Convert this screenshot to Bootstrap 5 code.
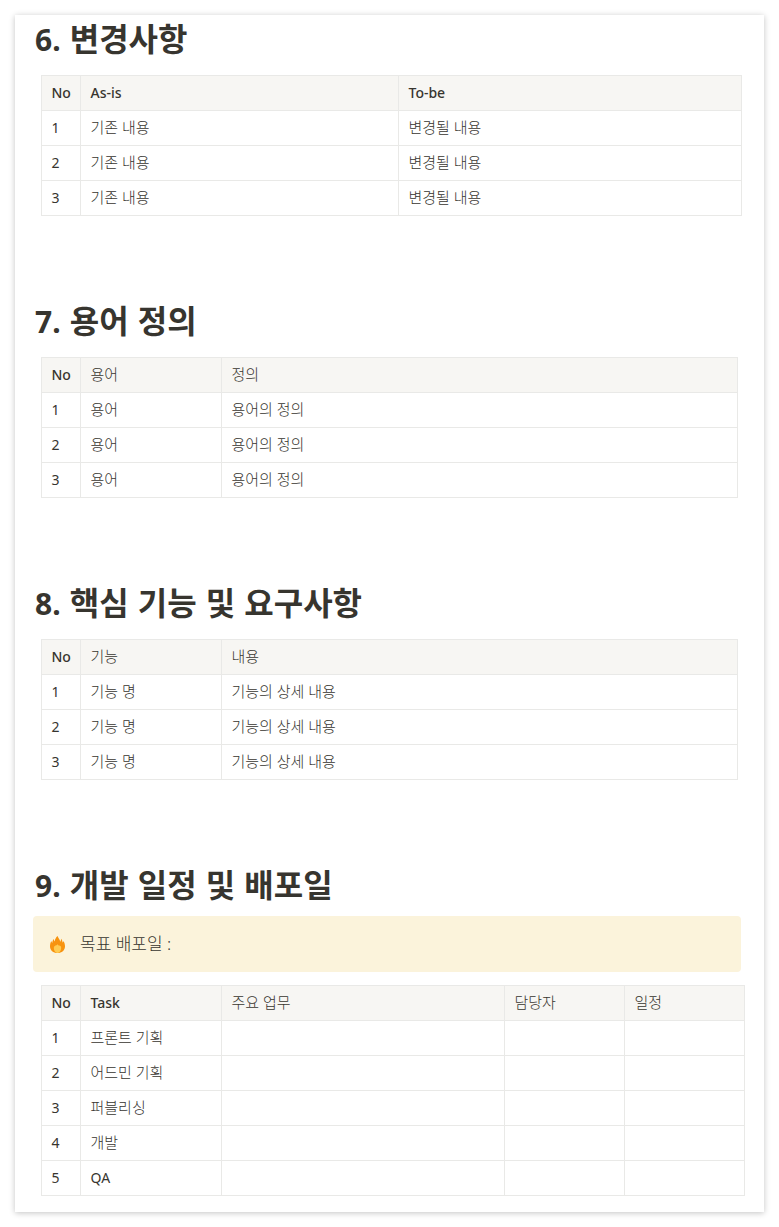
<!doctype html>
<html lang="ko">
<head>
<meta charset="utf-8">
<title>문서</title>
<link href="https://cdn.jsdelivr.net/npm/bootstrap@5.3.0/dist/css/bootstrap.min.css" rel="stylesheet">
<style>
html,body{height:100%;overflow:hidden}
body{background:#fff;font-family:"Noto Sans","Noto Sans CJK KR",sans-serif;color:#37352f;padding:15px}
.sheet{width:749px;height:1197px;background:#fff;box-shadow:0 1px 6px rgba(0,0,0,.24);padding:2px 0 0 18px;overflow:hidden}
.sec-title{font-family:"Noto Sans","Noto Sans CJK KR",sans-serif;font-size:32px;font-weight:700;line-height:44px;margin:0;color:#37352f;padding-left:2px;height:46px;word-spacing:.8px}
.sec-num{font-size:30px}
.sec{height:282px}
.sec-last{height:auto}
.doc-table{table-layout:fixed;border-collapse:collapse;margin:12px 0 0 8px;font-size:15px;color:#37352f}
.doc-table th,.doc-table td{border:1px solid #e9e9e7;height:35px;padding:0 9.5px 2px;vertical-align:middle;line-height:20px;font-weight:300;background:#fff;color:#37352f;box-shadow:none}
.doc-table thead th{background:#f7f6f3}
.doc-table .hd{font-weight:500}
.doc-table .lat{font-size:14px;padding-bottom:0;font-weight:400}
.doc-table .lat.hd{font-weight:500}
.doc-table-cal{margin-top:13px}
.w-a{width:700px}.w-b{width:696px}.w-c{width:703px}
.c-no{width:39px}.c-asis{width:318px}.c-tobe{width:343px}
.c-term{width:141px}.c-def{width:516px}.c-d5{width:283px}.c-d6{width:120px}
.notice{width:708px;height:56px;margin:7px 0 0 0;background:#fbf3db;border-radius:4px;padding-left:17px;gap:15px;color:#37352f}
.flame{width:15px;height:17px;flex:none}
.notice-t{font-size:17px;font-weight:300}
</style>
</head>
<body>
<div class="sheet">
  <section class="sec">
    <h2 class="sec-title"><span class="sec-num">6.</span> 변경사항</h2>
    <table class="doc-table w-a">
      <colgroup><col class="c-no"><col class="c-asis"><col class="c-tobe"></colgroup>
      <thead><tr><th class="hd lat">No</th><th class="hd lat">As-is</th><th class="hd lat">To-be</th></tr></thead>
      <tbody>
        <tr><td class="lat">1</td><td>기존 내용</td><td>변경될 내용</td></tr>
        <tr><td class="lat">2</td><td>기존 내용</td><td>변경될 내용</td></tr>
        <tr><td class="lat">3</td><td>기존 내용</td><td>변경될 내용</td></tr>
      </tbody>
    </table>
  </section>
  <section class="sec">
    <h2 class="sec-title"><span class="sec-num">7.</span> 용어 정의</h2>
    <table class="doc-table w-b">
      <colgroup><col class="c-no"><col class="c-term"><col class="c-def"></colgroup>
      <thead><tr><th class="hd lat">No</th><th>용어</th><th>정의</th></tr></thead>
      <tbody>
        <tr><td class="lat">1</td><td>용어</td><td>용어의 정의</td></tr>
        <tr><td class="lat">2</td><td>용어</td><td>용어의 정의</td></tr>
        <tr><td class="lat">3</td><td>용어</td><td>용어의 정의</td></tr>
      </tbody>
    </table>
  </section>
  <section class="sec">
    <h2 class="sec-title"><span class="sec-num">8.</span> 핵심 기능 및 요구사항</h2>
    <table class="doc-table w-b">
      <colgroup><col class="c-no"><col class="c-term"><col class="c-def"></colgroup>
      <thead><tr><th class="hd lat">No</th><th>기능</th><th>내용</th></tr></thead>
      <tbody>
        <tr><td class="lat">1</td><td>기능 명</td><td>기능의 상세 내용</td></tr>
        <tr><td class="lat">2</td><td>기능 명</td><td>기능의 상세 내용</td></tr>
        <tr><td class="lat">3</td><td>기능 명</td><td>기능의 상세 내용</td></tr>
      </tbody>
    </table>
  </section>
  <section class="sec-last">
    <h2 class="sec-title"><span class="sec-num">9.</span> 개발 일정 및 배포일</h2>
    <div class="notice d-flex align-items-center">
      <svg class="flame" viewBox="0 0 15 17" aria-hidden="true">
        <path fill="#f7930f" d="M7.600 0C8 1.500 9 2.600 9.700 4c.3.600.4 1.200.4 1.800.7-.6 1-1.600.9-3 1 .9 1.500 2.200 1.500 3.800.5-.3.900-.9 1-1.600C14.400 6.500 15 8.500 15 10.500 15 14.300 11.800 17 7.500 17S0 14.300 0 10.500C0 8.500.5 6.500 1.300 5c.2.800.5 1.500 1 1.900C2.400 5.200 2.900 3.900 3.900 2.900c0 1 .2 1.900.8 2.500C4.900 3.200 6 1.400 7.600 0z"/>
        <path fill="#ffcb52" d="M7.500 8.300c.5 1 1.300 1.500 2.300 1.300.2.500.6.800 1.200.9.700 3-1.200 6.500-3.500 6.500s-4.200-3.500-3.500-6.500c.6-.1 1-.4 1.300-1 .8.100 1.600-.3 2.200-1.200z"/>
      </svg>
      <span class="notice-t">목표 배포일 :</span>
    </div>
    <table class="doc-table doc-table-cal w-c">
      <colgroup><col class="c-no"><col class="c-term"><col class="c-d5"><col class="c-d6"><col class="c-d6"></colgroup>
      <thead><tr><th class="hd lat">No</th><th class="hd lat">Task</th><th>주요 업무</th><th>담당자</th><th>일정</th></tr></thead>
      <tbody>
        <tr><td class="lat">1</td><td>프론트 기획</td><td></td><td></td><td></td></tr>
        <tr><td class="lat">2</td><td>어드민 기획</td><td></td><td></td><td></td></tr>
        <tr><td class="lat">3</td><td>퍼블리싱</td><td></td><td></td><td></td></tr>
        <tr><td class="lat">4</td><td>개발</td><td></td><td></td><td></td></tr>
        <tr><td class="lat">5</td><td class="lat">QA</td><td></td><td></td><td></td></tr>
      </tbody>
    </table>
  </section>
</div>
</body>
</html>
